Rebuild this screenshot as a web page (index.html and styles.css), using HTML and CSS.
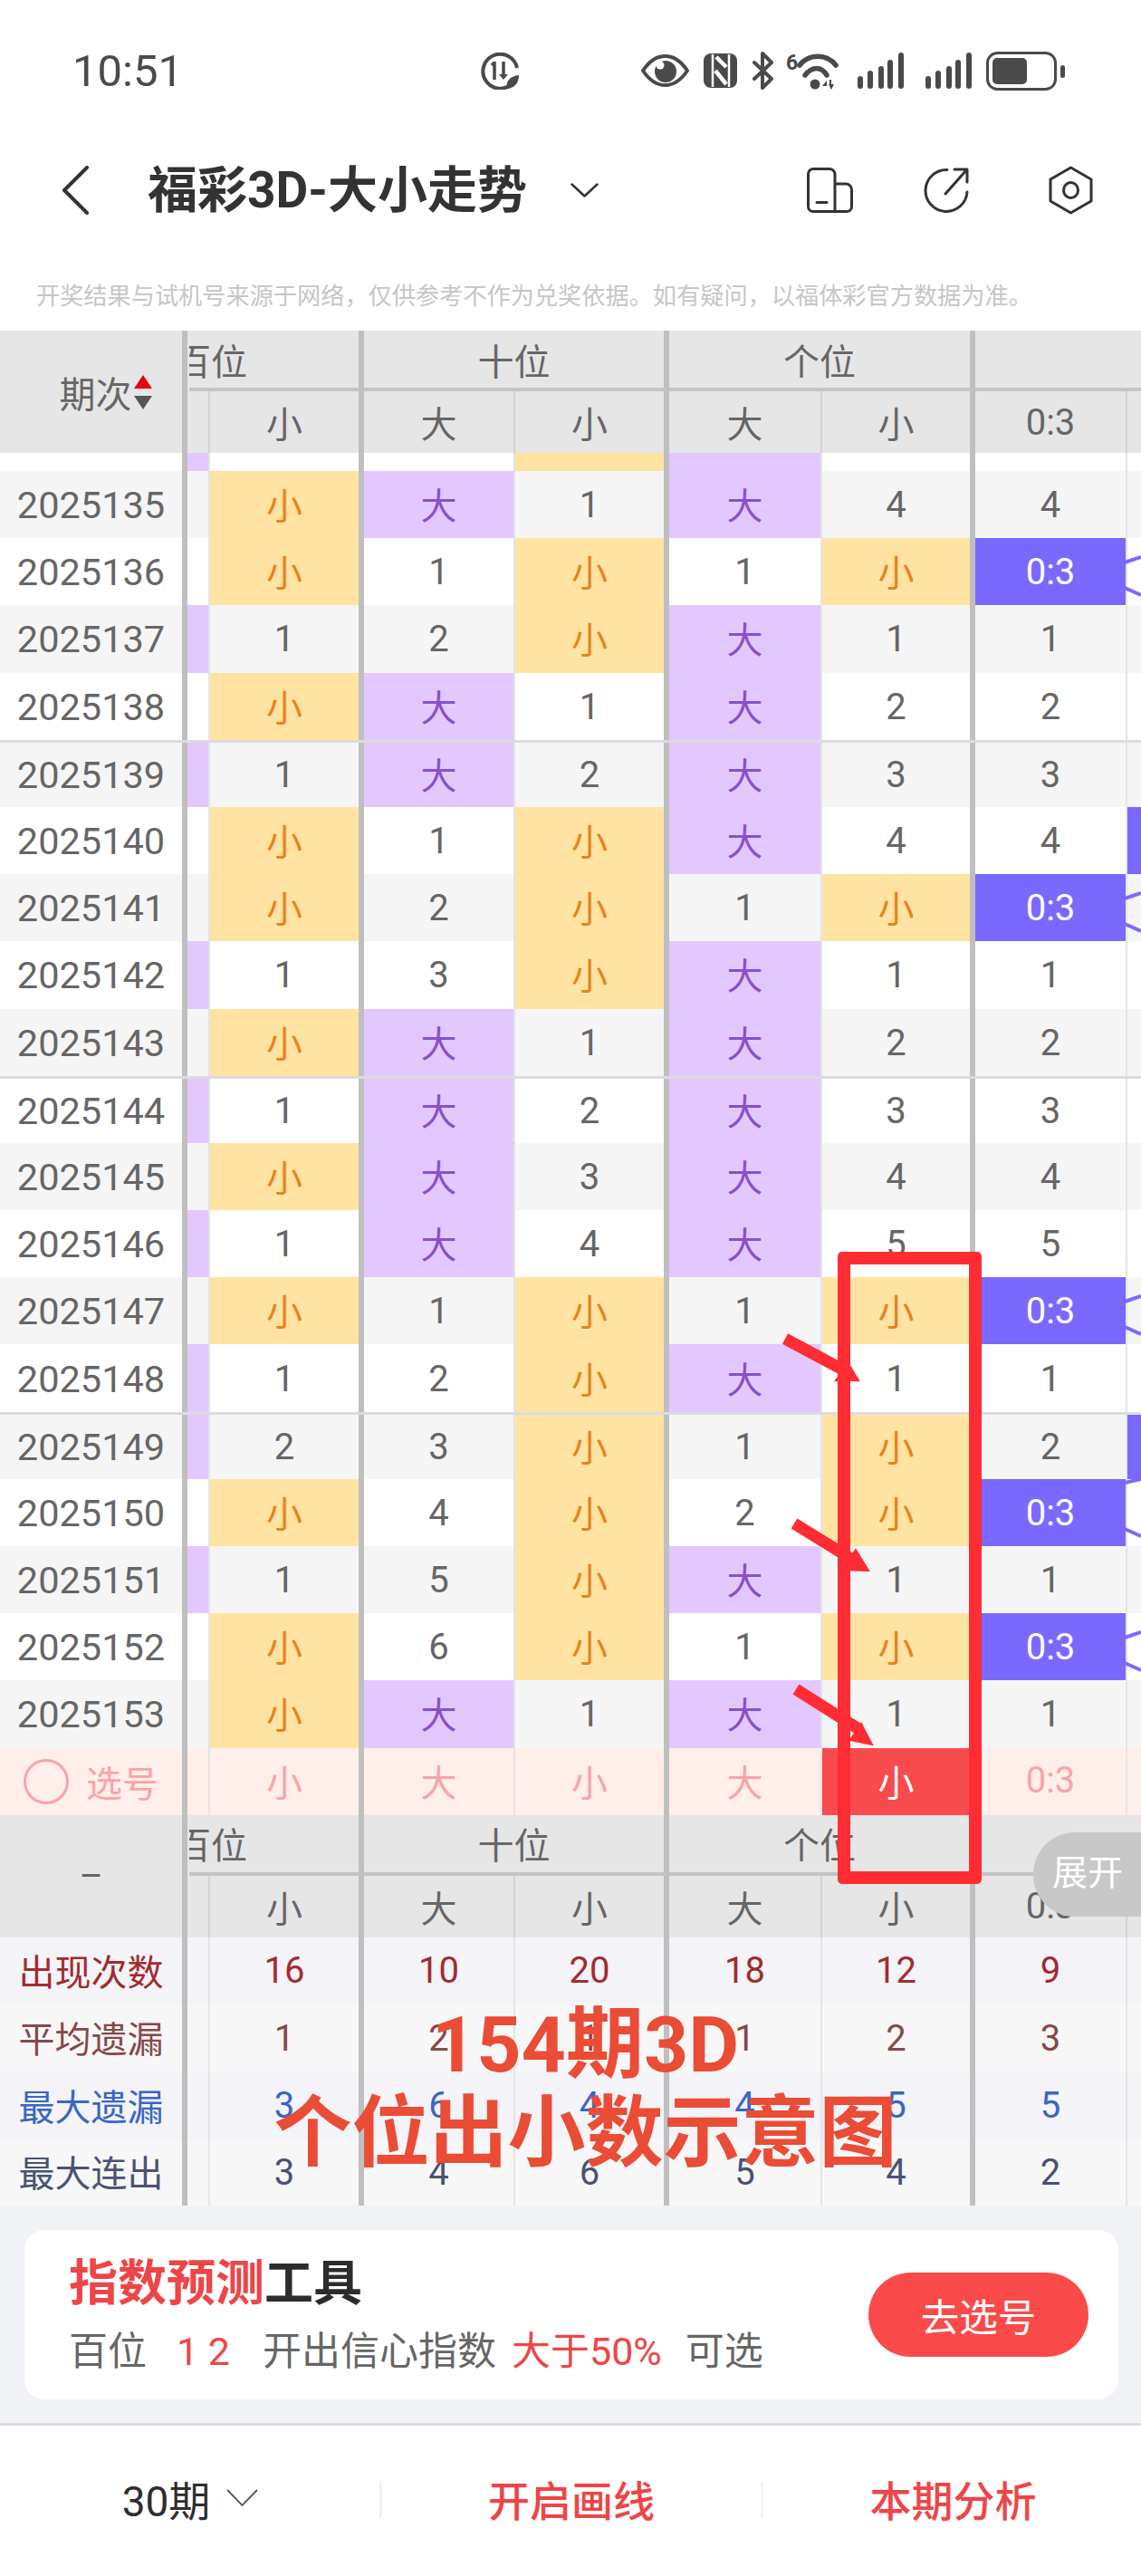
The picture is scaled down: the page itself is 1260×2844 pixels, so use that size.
FILE: index.html
```html
<!DOCTYPE html>
<html lang="zh">
<head>
<meta charset="utf-8">
<title>福彩3D-大小走势</title>
<link rel="stylesheet" href="styles.css">
</head>
<body>
<div class="page">
  <header class="status">
    <span class="time">10:51</span>
    <svg class="alarm" width="45" height="41" viewBox="0 0 45 41"><path d="M36 34A19 19 0 1 1 41 17" fill="none" stroke="#4a4a4a" stroke-width="4"/><path d="M16 11l-3 3M16 10v20M26 10v16" fill="none" stroke="#4a4a4a" stroke-width="3.500"/><path d="M21 24l5 6 5-6z" fill="#4a4a4a"/><path d="M30 40c-2-8 3-14 13-15 0 9-5 14-13 15z" fill="#4a4a4a"/></svg>
    <div class="status-icons">
      <svg width="53" height="36" viewBox="0 0 53 36"><path d="M2 18C10 6 18 2 26.500 2S43 6 51 18C43 30 35 34 26.500 34S10 30 2 18Z" fill="none" stroke="#4a4a4a" stroke-width="4"/><circle cx="27" cy="19" r="12" fill="#4a4a4a"/><circle cx="21" cy="12" r="4.500" fill="#fff"/></svg>
      <svg width="37" height="38" viewBox="0 0 37 38"><rect width="37" height="38" rx="8" fill="#4a4a4a"/><path d="M10 1v36M28 1v36" stroke="#fff" stroke-width="2.500"/><path d="M14 4l11 11M13 19l12 15" stroke="#fff" stroke-width="4.500"/></svg>
      <svg width="25" height="42" viewBox="0 0 25 42"><path d="M3 12L22 30 12 40V2L22 12 3 30" fill="none" stroke="#4a4a4a" stroke-width="4" stroke-linejoin="round" stroke-linecap="round"/></svg>
      <svg class="wifi" width="57" height="42" viewBox="0 0 57 42"><text x="0" y="20" class="wifi-six">6</text><path d="M15 15C25 2 45 2 55 15M21 26C29 16 39 16 45 26" fill="none" stroke="#4a4a4a" stroke-width="5.500" stroke-linecap="round"/><circle cx="32" cy="36" r="5.500" fill="#4a4a4a"/><path d="M40 38l5-6v6zM48 31h2v5h3l-3 6-3-6h1z" fill="#4a4a4a"/></svg>
      <svg class="signal" width="51" height="40" viewBox="0 0 51 40"><rect y="26" width="6" height="14" rx="3"/><rect x="11" y="20" width="6" height="20" rx="3"/><rect x="23" y="15" width="6" height="25" rx="3"/><rect x="33" y="8" width="6" height="32" rx="3"/><rect x="45" width="6" height="40" rx="3"/></svg>
      <svg class="signal tight" width="51" height="40" viewBox="0 0 51 40"><rect y="26" width="6" height="14" rx="3"/><rect x="11" y="20" width="6" height="20" rx="3"/><rect x="23" y="15" width="6" height="25" rx="3"/><rect x="33" y="8" width="6" height="32" rx="3"/><rect x="45" width="6" height="40" rx="3"/></svg>
      <svg width="87" height="43" viewBox="0 0 87 43"><rect x="1.500" y="1.500" width="75" height="40" rx="11" fill="none" stroke="#4a4a4a" stroke-width="3"/><rect x="7" y="7" width="38" height="29" rx="5" fill="#4a4a4a"/><rect x="82" y="15" width="5" height="14" rx="2.500" fill="#4a4a4a"/></svg>
    </div>
  </header>

  <nav class="nav">
    <svg class="back" width="30" height="54" viewBox="0 0 30 54"><path d="M28 2L3 27l25 25" fill="none" stroke="#333" stroke-width="4" stroke-linecap="round" stroke-linejoin="round"/></svg>
    <h1 class="nav-title">福彩3D-大小走势</h1>
    <svg class="nav-caret" width="31" height="16" viewBox="0 0 31 16"><path d="M1.500 1.500L15.500 14.500 29.500 1.500" fill="none" stroke="#333" stroke-width="2.500" stroke-linecap="round" stroke-linejoin="round"/></svg>
    <div class="nav-icons">
      <svg width="51" height="50" viewBox="0 0 51 50"><path d="M7 1.500H25A6 6 0 0 1 31 7.500V48.500H7A5.500 5.500 0 0 1 1.500 43V7A5.500 5.500 0 0 1 7 1.500ZM31 18H43A6.500 6.500 0 0 1 49.500 24.500V43A5.500 5.500 0 0 1 44 48.500H31M11 38.500H22" fill="none" stroke="#333" stroke-width="3" stroke-linecap="round"/></svg>
      <svg class="share" width="50" height="50" viewBox="0 0 50 50"><path d="M26 2.500A23 23 0 1 0 48 27M24 29L47.500 2.500M34 2H48V16" fill="none" stroke="#333" stroke-width="3" stroke-linecap="round" stroke-linejoin="round"/></svg>
      <svg class="hex" width="49" height="54" viewBox="0 0 49 54"><path d="M24.500 2L47 15V39L24.500 52 2 39V15Z" fill="none" stroke="#333" stroke-width="3" stroke-linejoin="round"/><ellipse cx="24.500" cy="27" rx="8" ry="8.500" fill="none" stroke="#333" stroke-width="3"/></svg>
    </div>
  </nav>

  <p class="notice">开奖结果与试机号来源于网络，仅供参考不作为兑奖依据。如有疑问，以福体彩官方数据为准。</p>

  <section class="chart">
    <div class="head">
      <div class="corner sortable">期次<span class="sort"><i class="up"></i><i class="down"></i></span></div>
      <div class="group first"><span>百位</span></div>
      <div class="group">十位</div>
      <div class="group">个位</div>
      <div class="group last"></div>
      <div class="hc thin"></div><div class="hc thick">小</div><div class="hc thin">大</div><div class="hc thick">小</div><div class="hc thin">大</div><div class="hc thick">小</div><div class="hc thin">0:3</div><div class="hc"></div>
    </div>

    <div class="row cut"><div class="cell"></div><div class="cell p"></div><div class="cell"></div><div class="cell"></div><div class="cell y"></div><div class="cell p"></div><div class="cell"></div><div class="cell"></div><div class="cell"></div></div>
    <div class="row alt"><div class="cell label">2025135</div><div class="cell"></div><div class="cell y">小</div><div class="cell p">大</div><div class="cell">1</div><div class="cell p">大</div><div class="cell">4</div><div class="cell">4</div><div class="cell"></div></div>
    <div class="row"><div class="cell label">2025136</div><div class="cell"></div><div class="cell y">小</div><div class="cell">1</div><div class="cell y">小</div><div class="cell">1</div><div class="cell y">小</div><div class="cell b">0:3</div><div class="cell"><svg class="link" width="18" height="74" viewBox="0 0 18 74"><path d="M0 27L18 21M0 55L18 63"/></svg></div></div>
    <div class="row alt"><div class="cell label">2025137</div><div class="cell p"></div><div class="cell">1</div><div class="cell">2</div><div class="cell y">小</div><div class="cell p">大</div><div class="cell">1</div><div class="cell">1</div><div class="cell"></div></div>
    <div class="row"><div class="cell label">2025138</div><div class="cell"></div><div class="cell y">小</div><div class="cell p">大</div><div class="cell">1</div><div class="cell p">大</div><div class="cell">2</div><div class="cell">2</div><div class="cell"></div></div>
    <div class="row alt sep"><div class="cell label">2025139</div><div class="cell p"></div><div class="cell">1</div><div class="cell p">大</div><div class="cell">2</div><div class="cell p">大</div><div class="cell">3</div><div class="cell">3</div><div class="cell"></div></div>
    <div class="row"><div class="cell label">2025140</div><div class="cell"></div><div class="cell y">小</div><div class="cell">1</div><div class="cell y">小</div><div class="cell p">大</div><div class="cell">4</div><div class="cell">4</div><div class="cell b"></div></div>
    <div class="row alt"><div class="cell label">2025141</div><div class="cell"></div><div class="cell y">小</div><div class="cell">2</div><div class="cell y">小</div><div class="cell">1</div><div class="cell y">小</div><div class="cell b">0:3</div><div class="cell"><svg class="link" width="18" height="74" viewBox="0 0 18 74"><path d="M0 27L18 21M0 55L18 63"/></svg></div></div>
    <div class="row"><div class="cell label">2025142</div><div class="cell p"></div><div class="cell">1</div><div class="cell">3</div><div class="cell y">小</div><div class="cell p">大</div><div class="cell">1</div><div class="cell">1</div><div class="cell"></div></div>
    <div class="row alt"><div class="cell label">2025143</div><div class="cell"></div><div class="cell y">小</div><div class="cell p">大</div><div class="cell">1</div><div class="cell p">大</div><div class="cell">2</div><div class="cell">2</div><div class="cell"></div></div>
    <div class="row sep"><div class="cell label">2025144</div><div class="cell p"></div><div class="cell">1</div><div class="cell p">大</div><div class="cell">2</div><div class="cell p">大</div><div class="cell">3</div><div class="cell">3</div><div class="cell"></div></div>
    <div class="row alt"><div class="cell label">2025145</div><div class="cell"></div><div class="cell y">小</div><div class="cell p">大</div><div class="cell">3</div><div class="cell p">大</div><div class="cell">4</div><div class="cell">4</div><div class="cell"></div></div>
    <div class="row"><div class="cell label">2025146</div><div class="cell p"></div><div class="cell">1</div><div class="cell p">大</div><div class="cell">4</div><div class="cell p">大</div><div class="cell">5</div><div class="cell">5</div><div class="cell"></div></div>
    <div class="row alt"><div class="cell label">2025147</div><div class="cell"></div><div class="cell y">小</div><div class="cell">1</div><div class="cell y">小</div><div class="cell">1</div><div class="cell y">小</div><div class="cell b">0:3</div><div class="cell"><svg class="link" width="18" height="74" viewBox="0 0 18 74"><path d="M0 27L18 21M0 55L18 63"/></svg></div></div>
    <div class="row"><div class="cell label">2025148</div><div class="cell p"></div><div class="cell">1</div><div class="cell">2</div><div class="cell y">小</div><div class="cell p">大</div><div class="cell">1</div><div class="cell">1</div><div class="cell"></div></div>
    <div class="row alt sep"><div class="cell label">2025149</div><div class="cell p"></div><div class="cell">2</div><div class="cell">3</div><div class="cell y">小</div><div class="cell">1</div><div class="cell y">小</div><div class="cell">2</div><div class="cell b"></div></div>
    <div class="row"><div class="cell label">2025150</div><div class="cell"></div><div class="cell y">小</div><div class="cell">4</div><div class="cell y">小</div><div class="cell">2</div><div class="cell y">小</div><div class="cell b">0:3</div><div class="cell"><svg class="link" width="18" height="74" viewBox="0 0 18 74"><path d="M0 4L18 0M0 55L18 63"/></svg></div></div>
    <div class="row alt"><div class="cell label">2025151</div><div class="cell p"></div><div class="cell">1</div><div class="cell">5</div><div class="cell y">小</div><div class="cell p">大</div><div class="cell">1</div><div class="cell">1</div><div class="cell"></div></div>
    <div class="row"><div class="cell label">2025152</div><div class="cell"></div><div class="cell y">小</div><div class="cell">6</div><div class="cell y">小</div><div class="cell">1</div><div class="cell y">小</div><div class="cell b">0:3</div><div class="cell"><svg class="link" width="18" height="74" viewBox="0 0 18 74"><path d="M0 27L18 21M0 55L18 63"/></svg></div></div>
    <div class="row alt"><div class="cell label">2025153</div><div class="cell"></div><div class="cell y">小</div><div class="cell p">大</div><div class="cell">1</div><div class="cell p">大</div><div class="cell">1</div><div class="cell">1</div><div class="cell"></div></div>
    <div class="row pick"><div class="cell label"><span class="radio"></span>选号</div><div class="cell"></div><div class="cell">小</div><div class="cell">大</div><div class="cell">小</div><div class="cell">大</div><div class="cell on">小</div><div class="cell">0:3</div><div class="cell"></div></div>

    <div class="head">
      <div class="corner">–</div>
      <div class="group first"><span>百位</span></div>
      <div class="group">十位</div>
      <div class="group">个位</div>
      <div class="group last"></div>
      <div class="hc thin"></div><div class="hc thick">小</div><div class="hc thin">大</div><div class="hc thick">小</div><div class="hc thin">大</div><div class="hc thick">小</div><div class="hc thin">0:3</div><div class="hc"></div>
    </div>

    <div class="row stat s-count"><div class="cell label">出现次数</div><div class="cell"></div><div class="cell">16</div><div class="cell">10</div><div class="cell">20</div><div class="cell">18</div><div class="cell">12</div><div class="cell">9</div><div class="cell"></div></div>
    <div class="row stat s-avg"><div class="cell label">平均遗漏</div><div class="cell"></div><div class="cell">1</div><div class="cell">2</div><div class="cell">1</div><div class="cell">1</div><div class="cell">2</div><div class="cell">3</div><div class="cell"></div></div>
    <div class="row stat s-miss"><div class="cell label">最大遗漏</div><div class="cell"></div><div class="cell">3</div><div class="cell">6</div><div class="cell">4</div><div class="cell">4</div><div class="cell">5</div><div class="cell">5</div><div class="cell"></div></div>
    <div class="row stat s-run"><div class="cell label">最大连出</div><div class="cell"></div><div class="cell">3</div><div class="cell">4</div><div class="cell">6</div><div class="cell">5</div><div class="cell">4</div><div class="cell">2</div><div class="cell"></div></div>
  </section>

  <section class="tool">
    <div class="tool-card">
      <div class="tool-text">
        <div class="tool-title"><em>指数预测</em>工具</div>
        <div class="tool-sub"><span>百位</span><em class="nums">1 2</em><span>开出信心指数</span><em>大于50%</em><span>可选</span></div>
      </div>
      <div class="tool-btn">去选号</div>
    </div>
  </section>

  <footer class="foot">
    <div class="foot-item">30期<svg width="35" height="20" viewBox="0 0 35 20"><path d="M1 1L17.500 18 34 1" fill="none" stroke="#555" stroke-width="1.800"/></svg></div>
    <div class="foot-item red">开启画线</div>
    <div class="foot-item red">本期分析</div>
  </footer>

  <div class="expand">展开</div>

  <div class="mark-box"></div>
  <svg class="marks" width="1260" height="2844" viewBox="0 0 1260 2844">
    <path d="M867 1478L938 1516M877 1682L945 1724M879 1865L950 1910" fill="none" stroke="#fd2d33" stroke-width="13"/>
    <path d="M948 1524L923 1524 937 1506ZM959 1734L930 1733 945 1711ZM963 1926L939 1921 951 1903Z" fill="#fd2d33" stroke="#fd2d33" stroke-width="2"/>
  </svg>
  <div class="caption"><div>154期3D</div><div>个位出小数示意图</div></div>
</div>
</body>
</html>
```
FILE: styles.css
```css
* { box-sizing: border-box; }
html, body { margin: 0; padding: 0; background: #fff; }
body { font-family: Roboto, "Noto Sans CJK SC", sans-serif; color: #666; }
.page { position: relative; width: 1260px; height: 2844px; overflow: hidden; }

/* status bar */
.status { height: 130px; padding: 26px 84px 0 80px; display: flex; align-items: center; }
.time { width: 121px; font-size: 49px; color: #4a4a4a; line-height: 1; white-space: nowrap; }
.alarm { margin-left: 329px; }
.status-icons { margin-left: auto; display: flex; align-items: center; gap: 16px; }
.wifi { margin-left: -3px; overflow: visible; }
.wifi-six { font: 700 23px Roboto, sans-serif; fill: #4a4a4a; }
.signal { fill: #4a4a4a; margin-left: 6px; }
.signal.tight { margin-left: 8px; }

/* nav */
.nav { height: 160px; display: flex; align-items: center; padding-left: 68px; padding-right: 53px; }
.nav-title { margin: 0 0 0 65px; font-size: 55px; font-weight: 700; color: #333; line-height: 1; white-space: nowrap; }
.nav-caret { margin-left: 48px; }
.nav-icons { margin-left: auto; display: flex; align-items: center; }
.share { margin-left: 78px; }
.hex { margin-left: 88px; }

.notice { margin: 0; height: 75px; padding-left: 40px; font-size: 26.200px; line-height: 75px; color: #c6c6c6; white-space: nowrap; }

/* chart */
.head, .row {
  display: grid;
  grid-template-columns: 207px 25px 170px 167px 170px 169px 169px 168px 15px;
}
.head { grid-template-rows: 67px 68px; background: #e6e6e6; font-size: 40px; color: #666; }
.corner { grid-row: 1 / span 2; border-right: 6px solid #bfbfbf; display: flex; align-items: center; justify-content: center; }
.corner.sortable { padding-left: 32px; }
.sort { display: inline-flex; flex-direction: column; gap: 8px; margin-left: 2px; }
.sort i { display: block; width: 0; height: 0; border-left: 10px solid transparent; border-right: 10px solid transparent; }
.sort .up { border-bottom: 15px solid #e8000f; }
.sort .down { border-top: 15px solid #555; }
.group { display: flex; align-items: center; justify-content: center; grid-column: span 2; border-right: 6px solid #bfbfbf; border-bottom: 4px solid #c4c4c4; }
.group.first { overflow: hidden; justify-content: flex-end; padding-right: 123px; margin-left: 2px; white-space: nowrap; }
.group.first span { flex: none; }
.group.last { border-right: 0; }
.hc { display: flex; align-items: center; justify-content: center; }
.hc.thin { border-right: 2px solid #d2d2d2; }
.hc.thick { border-right: 6px solid #bfbfbf; }

.row { height: 74.200px; background: #fff; font-size: 40px; }
.row.alt { background: #f5f5f5; }
.row.sep { border-top: 3px solid #dcdcdc; }
.row.cut { height: 20px; }
.cell { display: flex; align-items: center; justify-content: center; min-width: 0; padding-top: 1px; border-right: 2px solid #e4e4e4; white-space: nowrap; }
.cell:nth-child(1), .cell:nth-child(3), .cell:nth-child(5), .cell:nth-child(7) { border-right: 6px solid #bfbfbf; }
.cell:nth-child(9) { border-right: 0; overflow: visible; padding-top: 0; }
.label { font-size: 41.500px; }
.y { background: #ffe3a3; color: #e8831c; padding: 0 0 2px; }
.p { background: #e2c8ff; color: #8a50c8; padding: 0 0 2px; }
.b { background: #7b69ff; color: #fff; }
.link { display: block; flex: none; margin-left: -3px; overflow: visible; }
.link path { fill: none; stroke: #7b69ff; stroke-width: 4; }

.pick { background: #ffeee9; color: #f8a4a8; }
.pick .cell { padding: 0 0 2px; }
.pick .label { font-size: 40px; gap: 19px; justify-content: flex-start; padding: 0 0 0 26px; }
.radio { width: 50px; height: 50px; border-radius: 50%; border: 3px solid #f8a4a8; }
.pick .on { background: #f94a4d; color: #fff; }

.stat { height: 74.500px; background: #f7f7f8; }
.s-count { background: #f3f3f8; color: #a32a2f; }
.s-avg { color: #87484a; }
.s-miss { background: #f3f3f8; color: #3a66c4; }
.s-run { height: 73px; color: #4a5273; }
.stat .cell { padding: 0 0 1px; }
.stat .label { font-size: 40px; padding: 0 0 3px; }

/* tool card */
.tool { height: 240px; padding: 27px 25px 0 27px; background: #f1f2f6; }
.tool-card { height: 187px; padding: 2px 33px 0 49px; background: #fff; border-radius: 22px; display: flex; align-items: center; justify-content: space-between; }
.tool-title { font-size: 54px; font-weight: 700; line-height: 64px; color: #2c2c2c; white-space: nowrap; }
.tool-title em, .tool-sub em { font-style: normal; color: #ee4548; }
.tool-sub { margin-top: 14px; display: flex; align-items: center; font-size: 43px; line-height: 56px; color: #666; white-space: nowrap; }
.tool-sub .nums { margin-left: 33px; margin-right: 36px; }
.tool-sub em:not(.nums) { margin-left: 17px; margin-right: 26px; }
.tool-btn { width: 243px; height: 93px; margin-top: -2px; border-radius: 47px; background: #fa4a4a; color: #fff; font-size: 42.500px; display: flex; align-items: center; justify-content: center; }

/* footer */
.foot { height: 167px; border-top: 3px solid #dcdce0; display: flex; align-items: center; background: #fff; }
.foot-item { flex: 0 0 421px; height: 40px; padding-bottom: 4px; display: flex; align-items: center; justify-content: center; gap: 18px; font-size: 46px; color: #2e2e2e; border-right: 1px solid #e2e2e2; white-space: nowrap; }
.foot-item:last-child { border-right: 0; }
.foot-item.red { color: #ee4548; font-weight: 500; }

/* overlays */
.expand { position: absolute; left: 1141px; top: 2023px; width: 140px; height: 93px; padding-left: 21px; border-radius: 46px 0 0 46px; background: #c8c8c8; color: #fff; font-size: 39px; line-height: 91px; }
.mark-box { position: absolute; left: 925px; top: 1382px; width: 159px; height: 698px; border: 14px solid #fd2d33; border-radius: 5px; }
.marks { position: absolute; left: 0; top: 0; pointer-events: none; }
.caption { position: absolute; left: 0; top: 2209px; width: 1293px; text-align: center; font-size: 86px; font-weight: 700; line-height: 98px; color: #ea4c36; }
```
